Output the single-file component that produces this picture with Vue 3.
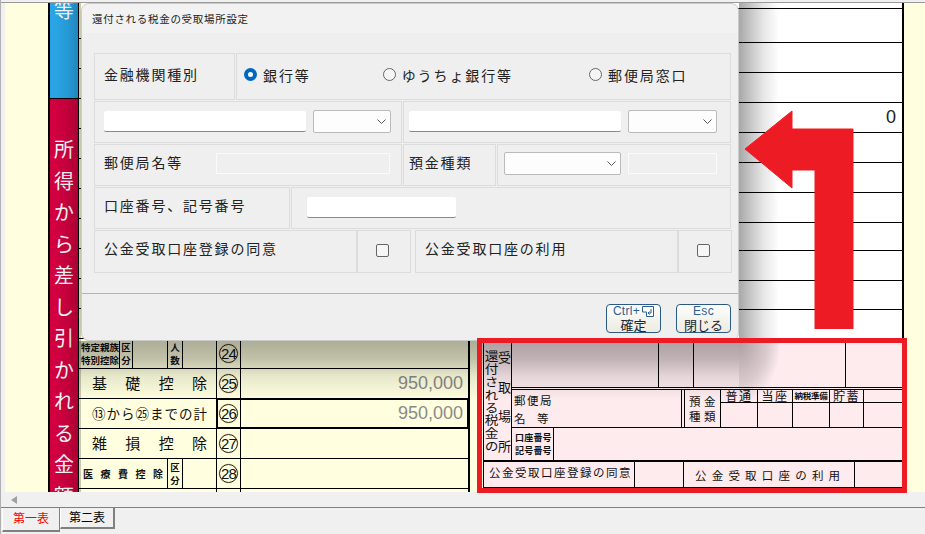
<script setup>
const bandChars = '所得から差し引かれる金額'.split('').map((c, i) => ({ c, i }))
const hiddenRows = Array.from({ length: 10 }, (_, i) => i)
const rightRows = [6, 34, 30, 30, 30, 30, 30, 30, 28, 30, 29, 29]
const radios = [
  { label: '銀行等', checked: true },
  { label: 'ゆうちょ銀行等', checked: false },
  { label: '郵便局窓口', checked: false }
]
</script>

<template>
  <div class="app">
    <div class="topline"></div>
    <div class="viewport">
      <div class="gutter"></div>
      <div class="band">
        <div class="band-blue"><span>等</span></div>
        <div class="band-red">
          <span v-for="b in bandChars" :key="b.i">{{ b.c }}</span>
        </div>
      </div>

      <div class="left-table">
        <div class="row first"></div>
        <div v-for="r in hiddenRows" :key="r" class="row"></div>
        <div class="row">
          <div class="c w41 tiny2"><span>特定親族</span><span>特別控除</span></div>
          <div class="c w13 tiny2 mid"><span>区</span><span>分</span></div>
          <div class="c w35"></div>
          <div class="c w15 tiny2 mid"><span>人</span><span>数</span></div>
          <div class="c w34"></div>
          <div class="group"><div class="num"><i>24</i></div><div class="val"></div></div>
        </div>
        <div class="row">
          <div class="c w138 jlabel"><span>基礎控除</span></div>
          <div class="group"><div class="num"><i>25</i></div><div class="val">950,000</div></div>
        </div>
        <div class="row">
          <div class="c w138 jlabel tight"><span>⑬から㉕までの計</span></div>
          <div class="group total"><div class="num"><i>26</i></div><div class="val">950,000</div></div>
        </div>
        <div class="row">
          <div class="c w138 jlabel"><span>雑損控除</span></div>
          <div class="group"><div class="num"><i>27</i></div><div class="val"></div></div>
        </div>
        <div class="row">
          <div class="c w89 small-j"><span>医療費控除</span></div>
          <div class="c w15 tiny2 mid"><span>区</span><span>分</span></div>
          <div class="c w34"></div>
          <div class="group"><div class="num"><i>28</i></div><div class="val"></div></div>
        </div>
        <div class="row">
          <div class="c w138"></div>
          <div class="group"><div class="num"></div><div class="val"></div></div>
        </div>
      </div>

      <div class="right-col">
        <div class="white-area">
          <div v-for="(h, i) in rightRows" :key="i" class="wrow" :style="{ height: h + 'px' }">
            <span v-if="i === 4" class="zero">0</span>
          </div>
        </div>
        <div class="lower">
          <div class="pink">
            <div class="pink-top">
              <div class="side">
                <div class="side-a">還付される税金の</div>
                <div class="side-b">受取場所</div>
              </div>
              <div class="pink-main">
                <div class="p1">
                  <div class="pc pw147"></div>
                  <div class="pc pw35"></div>
                  <div class="pc pw152"></div>
                  <div class="pc last"></div>
                </div>
                <div class="p2">
                  <div class="pc post">
                    <span>郵便局</span>
                    <span class="post-b"><b>名</b><b>等</b></span>
                  </div>
                  <div class="pc narrow"></div>
                  <div class="pc kind"><span>預 金</span><span>種 類</span></div>
                  <div class="accts">
                    <div class="acct a37"><div class="ah">普通</div><div class="ab"></div></div>
                    <div class="acct a35"><div class="ah">当座</div><div class="ab"></div></div>
                    <div class="acct a37"><div class="ah mini">納税準備</div><div class="ab"></div></div>
                    <div class="acct a34"><div class="ah">貯蓄</div><div class="ab"></div></div>
                    <div class="acct last"><div class="ah"></div><div class="ab"></div></div>
                  </div>
                </div>
                <div class="p3">
                  <div class="pc acno"><span>口座番号</span><span>記号番号</span></div>
                </div>
              </div>
            </div>
            <div class="pink-bottom">
              <div class="pc pb1"><span>公金受取口座登録の同意</span></div>
              <div class="pc pw49"></div>
              <div class="pc pb2"><span>公金受取口座の利用</span></div>
              <div class="pc last"></div>
            </div>
          </div>
        </div>
      </div>
      <div class="gutter-right"></div>
    </div>

    <div class="scrollbar"><span class="left-arrow"></span></div>
    <div class="tabs">
      <div class="tab active">第一表</div>
      <div class="tab">第二表</div>
    </div>

    <div class="shade shade-left"></div>
    <div class="shade shade-right"></div>
    <div class="shade shade-bottom"></div>
    <div class="shade shade-corner"></div>

    <section class="dialog">
      <header class="dlg-title">還付される税金の受取場所設定</header>
      <div class="dlg-body">
        <div class="drow h47">
          <div class="dcell label w140"><span class="up5">金融機関種別</span></div>
          <div class="dcell radios">
            <label v-for="r in radios" :key="r.label" class="radio-item">
              <span class="radio" :class="{ on: r.checked }"></span>{{ r.label }}
            </label>
          </div>
        </div>
        <div class="drow h42">
          <div class="dcell w308">
            <input class="field f202" type="text" />
            <div class="select s78"><svg width="9" height="5" viewBox="0 0 9 5"><path d="M.5.5l4 4 4-4" fill="none" stroke="#555" /></svg></div>
          </div>
          <div class="dcell grow pl5">
            <input class="field f212" type="text" />
            <div class="select s89"><svg width="9" height="5" viewBox="0 0 9 5"><path d="M.5.5l4 4 4-4" fill="none" stroke="#555" /></svg></div>
          </div>
        </div>
        <div class="drow h42">
          <div class="dcell label w308">
            <span class="lbl-fixed">郵便局名等</span>
            <div class="disabled d174"></div>
          </div>
          <div class="dcell label w93 pl5"><span>預金種類</span></div>
          <div class="dcell grow pl5">
            <div class="select s117"><svg width="9" height="5" viewBox="0 0 9 5"><path d="M.5.5l4 4 4-4" fill="none" stroke="#555" /></svg></div>
            <div class="disabled d89"></div>
          </div>
        </div>
        <div class="drow h42">
          <div class="dcell label w195"><span>口座番号、記号番号</span></div>
          <div class="dcell grow acct-cell"><input class="field f148" type="text" /></div>
        </div>
        <div class="drow h43 split">
          <div class="pair">
            <div class="dcell label w263"><span>公金受取口座登録の同意</span></div>
            <div class="dcell check-cell w54"><span class="check"></span></div>
          </div>
          <div class="pair">
            <div class="dcell label w263"><span>公金受取口座の利用</span></div>
            <div class="dcell check-cell w54"><span class="check"></span></div>
          </div>
        </div>
      </div>
      <footer class="dlg-foot">
        <button class="btn" type="button">
          <span class="btn-top">Ctrl+<svg width="12" height="12" viewBox="0 0 12 12"><path d="M.5.5H11.500V10.500H4.500V6H.5Z" fill="#fff" stroke="#2b5f92" /><path d="M9 3V7H6M7.500 5.500L6 7l1.500 1.500" fill="none" stroke="#2b5f92" /></svg></span>
          <span class="btn-main">確定</span>
        </button>
        <button class="btn" type="button">
          <span class="btn-top">Esc</span>
          <span class="btn-main">閉じる</span>
        </button>
      </footer>
    </section>

    <svg class="arrow" width="112" height="222" viewBox="0 0 112 222">
      <path d="M0 42L47 4V22H108V222H70V63H47V81Z" fill="#ed1c24" stroke="#ed1c24" stroke-linejoin="round" />
    </svg>
    <div class="red-frame"></div>
  </div>
</template>

<style>
html, body { margin: 0; background: #f0f0f0; }
</style>

<style scoped>
.app {
  position: relative;
  width: 925px;
  height: 534px;
  overflow: hidden;
  background: #f0f0f0;
  box-sizing: border-box;
  padding-left: 4px;
  border-left: 1px solid #b0b0b0;
  font-family: "Noto Sans CJK JP", "Liberation Sans", sans-serif;
  color: #111;
  display: flex;
  flex-direction: column;
}
.topline { height: 3px; flex: none; margin-left: -4px; box-sizing: border-box; border-bottom: 1px solid #9a9a9a; }
.viewport { flex: none; height: 489px; display: flex; overflow: hidden; background: #ffffdf; }
.gutter { width: 43px; flex: none; }
.gutter-right { flex: 1; }

.band { width: 31px; flex: none; box-sizing: border-box; border-left: 2px solid #000; border-right: 1px solid #000; height: 520px; }
.band-blue {
  height: 96px; box-sizing: border-box; border-bottom: 1px solid #000;
  background: #29a5e6;
  color: #fff; font-size: 20px; line-height: 20px; text-align: center; overflow: hidden;
}
.band-blue span { display: block; margin-top: -3px; }
.band-red {
  height: 424px; box-sizing: border-box; padding-top: 34px;
  background: #d20040;
  color: #fff; font-size: 20px; display: flex; flex-direction: column; align-items: center;
}
.band-red span { height: 31.500px; line-height: 31.500px; flex: none; }

.left-table { width: 391px; flex: none; box-sizing: border-box; border-right: 2px solid #000; background: #ffffdf; }
.row { height: 30px; box-sizing: border-box; border-bottom: 1px solid #000; display: flex; font-size: 14px; }
.row.first { height: 36px; }
.c { box-sizing: border-box; border-right: 1px solid #000; display: flex; align-items: center; height: 100%; flex: none; }
.w41 { width: 41px; } .w13 { width: 13px; } .w35 { width: 35px; } .w15 { width: 15px; } .w34 { width: 34px; }
.w138 { width: 138px; } .w89 { width: 89px; }
.tiny2 { flex-direction: column; justify-content: center; font-size: 9.500px; line-height: 13px; font-weight: 700; padding-left: 2px; align-items: flex-start; white-space: nowrap; }
.tiny2.mid { align-items: center; padding-left: 0; }
.jlabel { padding: 0 9px 3px 13px; }
.jlabel span { display: block; width: 100%; text-align: justify; text-align-last: justify; font-size: 15px; }
.jlabel.tight { padding-bottom: 1px; }
.jlabel.tight span { font-size: 13.500px; }
.small-j { padding: 0 4px 0 4px; }
.small-j span { display: block; width: 100%; text-align: justify; text-align-last: justify; font-size: 10px; font-weight: 700; }
.group { flex: 1; display: flex; height: 100%; position: relative; }
.group.total { outline: 2px solid #000; outline-offset: -1px; z-index: 1; }
.num { width: 24px; flex: none; box-sizing: border-box; border-right: 1px solid #000; display: flex; align-items: center; justify-content: center; }
.num i {
  font-style: normal; width: 19px; height: 19px; box-sizing: border-box; border: 1px solid #222; border-radius: 50%;
  font-family: "Liberation Sans", sans-serif; font-size: 15px; letter-spacing: -.8px; line-height: 17px; text-align: center; display: block;
  box-shadow: 0 0 0 .5px rgba(220, 140, 40, .4);
}
.val { flex: 1; text-align: right; padding-right: 5px; font-family: "Liberation Sans", sans-serif; font-size: 18px; line-height: 28px; color: #8a8a8a; }

.right-col { width: 434px; flex: none; }
.white-area { height: 335px; background: #fff; box-sizing: border-box; border-right: 2px solid #000; overflow: hidden; }
.wrow { box-sizing: border-box; border-bottom: 1px solid #000; display: flex; justify-content: flex-end; align-items: center; }
.zero { font-family: "Liberation Sans", sans-serif; font-size: 18px; padding-right: 6px; color: #222; }
.lower { box-sizing: border-box; padding: 5px 0 0 13px; height: 154px; }

.pink { background: #fdebee; width: 421px; box-sizing: border-box; border-left: 1px solid #000; border-right: 1px solid #000; height: 145px; border-bottom: 1px solid #000; }
.pink-top { display: flex; height: 119px; box-sizing: border-box; border-bottom: 2px solid #000; }
.side { width: 28px; flex: none; box-sizing: border-box; border-right: 1px solid #000; display: flex; }
.side-a { width: 14px; flex: none; padding-top: 7px; font-size: 12.500px; line-height: 14px; letter-spacing: .4px; writing-mode: vertical-rl; white-space: nowrap; transform: scaleX(1.100); }
.side-b { width: 13px; flex: none; padding-top: 8px; font-size: 13px; line-height: 13px; letter-spacing: 16.500px; writing-mode: vertical-rl; white-space: nowrap; height: 104px; }
.pink-main { flex: 1; display: flex; flex-direction: column; }
.pc { box-sizing: border-box; border-right: 1px solid #000; height: 100%; flex: none; }
.pc.last { border-right: 0; flex: 1; }
.pw147 { width: 147px; } .pw35 { width: 35px; } .pw152 { width: 152px; } .pw49 { width: 49px; }
.p1 { height: 47px; flex: none; box-sizing: border-box; display: flex; border-bottom: 3px double #000; }
.p2 { height: 38px; flex: none; box-sizing: border-box; display: flex; border-bottom: 1px solid #000; }
.post { width: 170px; font-size: 11.500px; letter-spacing: 1.500px; padding: 1px 0 0 2px; display: flex; flex-direction: column; line-height: 18px; }
.post-b { display: flex; justify-content: space-between; width: 36px; }
.post-b b { font-weight: 400; }
.narrow { width: 3px; }
.kind { width: 36px; font-size: 11.500px; display: flex; flex-direction: column; align-items: center; line-height: 15px; justify-content: center; white-space: pre; letter-spacing: .5px; }
.accts { flex: 1; display: flex; }
.acct { box-sizing: border-box; border-right: 1px solid #000; flex: none; display: flex; flex-direction: column; }
.acct.last { border-right: 0; flex: 1; }
.a37 { width: 37px; } .a35 { width: 35px; } .a34 { width: 34px; }
.ah { height: 13px; box-sizing: border-box; border-bottom: 1px solid #000; font-size: 12px; line-height: 11px; text-align: center; letter-spacing: 1.500px; white-space: nowrap; }
.ah.mini { font-size: 8.500px; letter-spacing: -.2px; font-weight: 700; }
.p3 { flex: 1; display: flex; }
.acno { width: 42px; font-size: 9px; font-weight: 700; display: flex; flex-direction: column; justify-content: center; line-height: 13px; padding-left: 3px; white-space: nowrap; letter-spacing: .2px; }
.pink-bottom { height: 25px; display: flex; }
.pb1 { width: 151px; font-size: 11.500px; letter-spacing: 1.500px; padding: 1px 0 0 5px; line-height: 19px; white-space: nowrap; overflow: hidden; }
.pb2 { width: 171px; font-size: 11.500px; letter-spacing: 5.200px; padding: 4px 0 0 11px; line-height: 19px; white-space: nowrap; overflow: hidden; }

.scrollbar { height: 16px; flex: none; box-sizing: border-box; border-bottom: 1px solid #808080; margin-left: -4px; padding-left: 5px; display: flex; align-items: center; }
.left-arrow { width: 0; height: 0; border-style: solid; border-width: 4px 6px 4px 0; border-color: transparent #a0a0a0 transparent transparent; margin-left: 5px; }
.tabs { display: flex; flex: 1; margin-left: -3px; align-items: flex-start; }
.tab { box-sizing: border-box; width: 55px; height: 21px; border-right: 2px solid #808080; border-bottom: 2px solid #808080; border-left: 1px solid #fff; background: #f0f0f0; font-size: 12px; line-height: 18px; text-align: center; color: #000; }
.tab.active { width: 58px; height: 24px; color: #f00; line-height: 19px; border-right-width: 1px; }

.shade { position: absolute; z-index: 4; pointer-events: none; }
.shade-left { left: 54px; top: 3px; width: 26px; height: 489px; background: linear-gradient(90deg, transparent, rgba(0, 0, 0, .08) 50%, rgba(0, 0, 0, .22)); }
.shade-right { left: 738px; top: 3px; width: 40px; height: 338px; background: linear-gradient(90deg, rgba(0, 0, 0, .34), rgba(0, 0, 0, .24) 25%, rgba(0, 0, 0, .1) 60%, transparent); }
.shade-bottom { left: 78px; top: 341px; width: 660px; height: 60px; background: linear-gradient(180deg, rgba(0, 0, 0, .32), rgba(0, 0, 0, .24) 30%, rgba(0, 0, 0, .09) 60%, transparent); }
.shade-corner { left: 738px; top: 341px; width: 40px; height: 60px; background: radial-gradient(ellipse at top left, rgba(0, 0, 0, .32), rgba(0, 0, 0, .14) 50%, transparent 74%); }

.dialog {
  position: absolute; left: 80px; top: 3px; width: 658px; height: 338px; box-sizing: border-box;
  background: #efefef; border: 1px solid #cbcbcb; border-radius: 8px;
  display: flex; flex-direction: column; z-index: 5;
}
.dlg-title { height: 29px; flex: none; box-sizing: border-box; padding: 7px 0 0 10px; font-size: 10.500px; line-height: 15px; letter-spacing: .7px; color: #222; background: #f2f2f2; border-radius: 8px 8px 0 0; }
.dlg-body { padding: 20px 0 0 12px; display: flex; flex-direction: column; gap: 1px; }
.drow { display: flex; width: 637px; gap: 1px; }
.drow.split { gap: 4px; width: 638px; }
.h47 { height: 47px; } .h42 { height: 42px; } .h43 { height: 43px; }
.pair { display: flex; }
.dcell { box-sizing: border-box; border: 1px solid #dcdcdc; display: flex; align-items: center; padding-left: 9px; flex: none; }
.pl5 { padding-left: 5px; }
.label { font-size: 14px; letter-spacing: 1.800px; white-space: nowrap; color: #222; }
.label > span { margin-bottom: 7px; }
.label > span.up5 { margin-bottom: 5px; }
.w140 { width: 141px; } .w308 { width: 308px; } .w93 { width: 93px; } .w195 { width: 196px; } .w263 { width: 263px; } .w54 { width: 54px; }
.grow { flex: 1; }
.radios { flex: 1; padding-left: 7px; font-size: 14px; letter-spacing: 1.900px; color: #222; }
.radio-item { display: flex; align-items: center; gap: 6px; white-space: nowrap; margin-bottom: 4px; }
.radio-item:nth-child(1) { margin-right: 72px; }
.radio-item:nth-child(2) { margin-right: 76px; }
.radio { width: 13px; height: 13px; box-sizing: border-box; border: 1px solid #666; border-radius: 50%; background: #f6f6f6; flex: none; }
.radio.on { border: 4px solid #0067c0; background: #fff; }
.field { box-sizing: border-box; height: 21px; border: 0; border-bottom: 1px solid #8a8a8a; border-radius: 2px; background: #fff; padding: 0; outline: none; flex: none; margin-top: -1px; }
.f202 { width: 202px; } .f212 { width: 212px; } .f148 { width: 149px; }
.select { box-sizing: border-box; height: 23px; border: 1px solid #bbb; border-radius: 2px; background: #fdfdfd; display: flex; align-items: center; justify-content: flex-end; padding-right: 4px; flex: none; margin-left: 7px; margin-top: -1px; }
.s78 { width: 78px; } .s89 { width: 89px; } .s117 { width: 117px; margin-left: 1px; margin-top: -3px; }
.disabled { box-sizing: border-box; height: 21px; border: 1px solid #fafafa; background: #efefef; flex: none; margin-top: -3px; }
.d174 { width: 174px; margin-left: 30px; }
.d89 { width: 89px; margin-left: 7px; }
.lbl-fixed { width: 82px; flex: none; }
.acct-cell { padding-left: 15px; }
.check-cell { padding: 0 3px 2px 0; justify-content: center; }
.check { width: 13px; height: 13px; box-sizing: border-box; border: 1px solid #666; border-radius: 2px; background: #f6f6f6; }
.dlg-foot { margin-top: 20px; border-top: 1px solid #b4b4b4; flex: 1; display: flex; justify-content: flex-end; gap: 15px; padding: 10px 7px 0 0; align-items: flex-start; }
.btn { width: 55px; height: 29px; box-sizing: border-box; border: 1px solid #2b5a85; border-radius: 4px; background: linear-gradient(#fdfdfd, #ecece2); padding: 0; display: flex; flex-direction: column; align-items: center; font-family: inherit; }
.btn-top { font-family: "Liberation Sans", sans-serif; font-size: 12px; line-height: 13px; color: #2b5f92; letter-spacing: .3px; display: flex; align-items: center; gap: 2px; height: 13px; }
.btn-main { font-size: 13px; line-height: 14px; color: #1b2530; }

.arrow { position: absolute; left: 744px; top: 107px; z-index: 6; }
.red-frame { position: absolute; left: 476px; top: 338px; width: 430px; height: 155px; box-sizing: border-box; border: 5px solid #ed1c24; z-index: 6; pointer-events: none; }
</style>
